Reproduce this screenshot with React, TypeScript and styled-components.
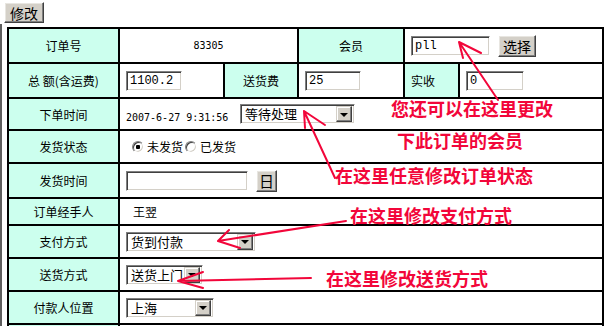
import styled, { createGlobalStyle } from "styled-components";

const GlobalStyle = createGlobalStyle`
  html, body {
    margin: 0;
    padding: 0;
    background: #ffffff;
  }
  body {
    font-family: "Noto Sans CJK SC", "Liberation Sans", sans-serif;
    font-size: 12px;
    color: #000;
  }
`;

const RED = "#f2063a";

export default function App() {
  return (
    <Page>
      <GlobalStyle />
      <Toolbar>
        <ClassicButton $w={40} $h={21} $size={14}>
          修改
        </ClassicButton>
      </Toolbar>

      <Frame>
        <OrderTable>
          {/* 第一行 */}
          <LabelCell>订单号</LabelCell>
          <Cell $span={2} $center>
            <Digits>83305</Digits>
          </Cell>
          <LabelCell>会员</LabelCell>
          <Cell $span={2}>
            <TextBox $w={79}>pll</TextBox>
            <ClassicButton $w={38} $h={22} $size={14}>
              选择
            </ClassicButton>
          </Cell>

          {/* 金额 */}
          <LabelCell>总&nbsp;额(含运费)</LabelCell>
          <Cell>
            <TextBox $w={56}>1100.2</TextBox>
          </Cell>
          <LabelCell>送货费</LabelCell>
          <Cell>
            <TextBox $w={56}>25</TextBox>
          </Cell>
          <LabelCell $left>实收</LabelCell>
          <Cell>
            <TextBox $w={58}>0</TextBox>
          </Cell>

          <LabelCell>下单时间</LabelCell>
          <Cell $span={5}>
            <DateText>2007-6-27 9:31:56</DateText>
            <SelectBox label="等待处理" width={115} />
          </Cell>

          <LabelCell>发货状态</LabelCell>
          <Cell $span={5}>
            <RadioGroup>
              <RadioMark $checked />
              <RadioText>未发货</RadioText>
              <RadioMark />
              <RadioText>已发货</RadioText>
            </RadioGroup>
          </Cell>

          <LabelCell>发货时间</LabelCell>
          <Cell $span={5}>
            <TextBox $w={122} />
            <ClassicButton $w={21} $h={22} $size={15}>
              日
            </ClassicButton>
          </Cell>

          <LabelCell>订单经手人</LabelCell>
          <Cell $span={5}>
            <Handler>王翌</Handler>
          </Cell>

          <LabelCell>支付方式</LabelCell>
          <Cell $span={5}>
            <SelectBox label="货到付款" width={130} />
          </Cell>

          <LabelCell>送货方式</LabelCell>
          <Cell $span={5}>
            <SelectBox label="送货上门" width={77} />
          </Cell>

          <LabelCell>付款人位置</LabelCell>
          <Cell $span={5}>
            <SelectBox label="上海" width={88} />
          </Cell>

          <LabelCell />
          <Cell $span={5} />
        </OrderTable>
      </Frame>

      {/* 红色说明文字与箭头 */}
      <Note $x={391} $y={99}>您还可以在这里更改</Note>
      <Note $x={397} $y={131}>下此订单的会员</Note>
      <Note $x={335} $y={166}>在这里任意修改订单状态</Note>
      <Note $x={350} $y={206}>在这里修改支付方式</Note>
      <Note $x={326} $y={269}>在这里修改送货方式</Note>

      <ArrowLayer width="609" height="326" viewBox="0 0 609 326">
        <g stroke={RED} strokeWidth="2" fill="none" strokeLinecap="round">
          {/* 会员 */}
          <path d="M459 42 L498 100 M459 42 L481 53 M459 42 L463 58" />
          {/* 订单状态 */}
          <path d="M304 111 L335 178 M304 111 L325 125 M304 111 L305 128" />
          {/* 支付方式 */}
          <path d="M218 241 L346 221 M218 241 L229 230 M218 241 L240 248" />
          {/* 送货方式 */}
          <path d="M178 281 L311 278 M178 281 L203 272 M178 281 L203 288" />
        </g>
      </ArrowLayer>
    </Page>
  );
}

function SelectBox({ label, width }: { label: string; width: number }) {
  return (
    <Select style={{ width }}>
      <SelectText>{label}</SelectText>
      <DropButton>
        <Caret />
      </DropButton>
    </Select>
  );
}

/* ======= Styled Components ======= */

const Page = styled.div`
  position: relative;
  width: 609px;
  height: 326px;
  overflow: hidden;
`;

const Toolbar = styled.div`
  display: flex;
  padding: 2px 4px 1px;
`;

const Frame = styled.div`
  border-left: 2px solid #5e5e5e;
  padding: 3px 0 0 5px;
  height: 400px;
`;

const ClassicButton = styled.div<{ $w: number; $h: number; $size: number }>`
  box-sizing: border-box;
  width: ${({ $w }) => $w}px;
  height: ${({ $h }) => $h}px;
  display: flex;
  align-items: center;
  justify-content: center;
  background: #d4d0c8;
  border: 1px solid;
  border-color: #ffffff #404040 #404040 #ffffff;
  box-shadow: inset -1px -1px #808080, inset 1px 1px #e8e6e1;
  font-size: ${({ $size }) => $size}px;
  line-height: 1;
  flex-shrink: 0;
`;

const OrderTable = styled.div`
  display: grid;
  grid-template-columns: 111px 105px 74px 106px 55px 144px;
  grid-template-rows: 35px 35px 32px 33px 35px 27px 33px 33px 33px 33px;
  width: 597px;
  box-sizing: border-box;
  border: 1px solid #000;
`;

const Cell = styled.div<{ $span?: number; $center?: boolean }>`
  grid-column: span ${({ $span }) => $span ?? 1};
  box-sizing: border-box;
  border: 1px solid #000;
  background: #ffffff;
  display: flex;
  align-items: center;
  justify-content: ${({ $center }) => ($center ? "center" : "flex-start")};
  padding: 0 6px;
  min-width: 0;
  white-space: nowrap;
`;

const LabelCell = styled.div<{ $left?: boolean }>`
  box-sizing: border-box;
  border: 1px solid #000;
  background: #ccffee;
  display: flex;
  align-items: center;
  justify-content: ${({ $left }) => ($left ? "flex-start" : "center")};
  padding: 0 6px;
  white-space: nowrap;
`;

const Digits = styled.span`
  font-family: "DejaVu Sans Mono", "Liberation Mono", monospace;
  font-size: 10px;
`;

const DateText = styled(Digits)`
  width: 102px;
  margin: 6px 12px 0 0;
`;

const TextBox = styled.div<{ $w: number }>`
  box-sizing: border-box;
  width: ${({ $w }) => $w}px;
  height: 20px;
  background: #fff;
  border: 1px solid;
  border-color: #808080 #ffffff #ffffff #808080;
  box-shadow: inset 1px 1px #404040, inset -1px -1px #d4d0c8;
  padding: 0 3px;
  display: flex;
  align-items: center;
  font-family: "Liberation Mono", "DejaVu Sans Mono", monospace;
  font-size: 12px;
  margin-right: 8px;
  flex-shrink: 0;
`;

const Select = styled.div`
  box-sizing: border-box;
  height: 20px;
  display: flex;
  align-items: center;
  background: #fff;
  border: 1px solid;
  border-color: #808080 #ffffff #ffffff #808080;
  box-shadow: inset 1px 1px #404040, inset -1px -1px #d4d0c8;
  padding: 2px;
  flex-shrink: 0;
`;

const SelectText = styled.span`
  flex: 1;
  font-size: 13px;
  line-height: 16px;
  padding-left: 2px;
  white-space: nowrap;
`;

const DropButton = styled.div`
  box-sizing: border-box;
  width: 16px;
  height: 16px;
  background: #d4d0c8;
  border: 1px solid;
  border-color: #d4d0c8 #404040 #404040 #d4d0c8;
  box-shadow: inset -1px -1px #808080, inset 1px 1px #ffffff;
  display: flex;
  align-items: center;
  justify-content: center;
  flex-shrink: 0;
`;

const Caret = styled.span`
  width: 0;
  height: 0;
  border-left: 4px solid transparent;
  border-right: 4px solid transparent;
  border-top: 4px solid #000;
  margin-top: 1px;
`;

const RadioGroup = styled.div`
  display: flex;
  align-items: center;
  margin-left: 6px;
`;

const RadioMark = styled.span<{ $checked?: boolean }>`
  box-sizing: border-box;
  width: 12px;
  height: 12px;
  border-radius: 50%;
  border: 1px solid;
  border-color: #808080 #ffffff #ffffff #808080;
  box-shadow: inset 1px 1px #404040, inset -1px -1px #d4d0c8;
  background: ${({ $checked }) =>
    $checked
      ? "radial-gradient(circle, #000 0 2px, #fff 2.5px)"
      : "#fff"};
  margin-right: 3px;
`;

const RadioText = styled.span`
  font-size: 12px;
  margin-right: 2px;
`;

const Handler = styled.span`
  margin-left: 7px;
`;

const Note = styled.div<{ $x: number; $y: number }>`
  position: absolute;
  left: ${({ $x }) => $x}px;
  top: ${({ $y }) => $y}px;
  color: ${RED};
  font-size: 18px;
  font-weight: 700;
  line-height: 18px;
  white-space: nowrap;
`;

const ArrowLayer = styled.svg`
  position: absolute;
  left: 0;
  top: 0;
  pointer-events: none;
`;
